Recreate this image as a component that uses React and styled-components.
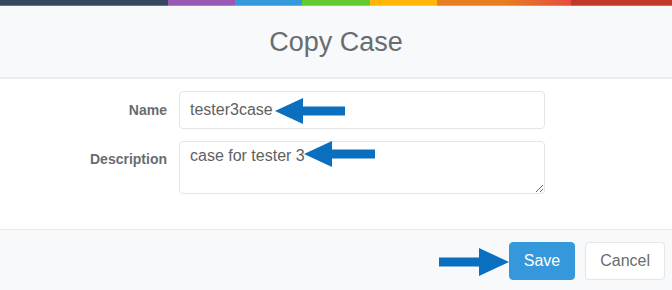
import React from 'react'
import styled, { createGlobalStyle } from 'styled-components'

const GlobalStyle = createGlobalStyle`
  html, body {
    margin: 0;
    padding: 0;
    background: #ffffff;
  }
  body {
    font-family: "Liberation Sans", Arial, sans-serif;
  }
`

const Arrow = ({ top, left, width, height, shaft, dir }) => {
  const head = Math.round(height * 1.07)
  const mid = height / 2
  const s1 = mid - shaft / 2
  const s2 = mid + shaft / 2
  const points =
    dir === 'right'
      ? `${width},${mid} ${width - head},0 ${width - head},${s1} 0,${s1} 0,${s2} ${width - head},${s2} ${width - head},${height}`
      : `0,${mid} ${head},0 ${head},${s1} ${width},${s1} ${width},${s2} ${head},${s2} ${head},${height}`
  return (
    <ArrowMark $top={top} $left={left} width={width} height={height} viewBox={`0 0 ${width} ${height}`}>
      <polygon points={points} fill="#0b6fc0" />
    </ArrowMark>
  )
}

const App = () => {
  return (
    <>
      <GlobalStyle />
      <Modal>
        <ColorLine />
        <Header>
          <Title>Copy Case</Title>
        </Header>
        <Body>
          <Form>
            <Label>Name</Label>
            <Input defaultValue="tester3case" />
            <Label $top>Description</Label>
            <TextArea defaultValue="case for tester 3" />
          </Form>
        </Body>
        <Footer>
          <Button $primary>Save</Button>
          <Button>Cancel</Button>
        </Footer>

        <Arrow top={98} left={275} width={70} height={26} shaft={9} />
        <Arrow top={141} left={304} width={71} height={26} shaft={9} />
        <Arrow top={248} left={439} width={70} height={28} shaft={9} dir="right" />
      </Modal>
    </>
  )
}

export default App

const Modal = styled.div`
  position: relative;
  width: 672px;
  height: 290px;
  overflow: hidden;
  background: #ffffff;
  color: #6a6c6f;
`

const ColorLine = styled.div`
  height: 5px;
  border-bottom: 1px solid rgba(255, 255, 255, 0.25);
  background-image: linear-gradient(
    to right,
    #34495e, #34495e 25%,
    #9b59b6 25%, #9b59b6 35%,
    #3498db 35%, #3498db 45%,
    #62cb31 45%, #62cb31 55%,
    #ffb606 55%, #ffb606 65%,
    #e67e22 65%, #e67e22 75%,
    #e74c3c 85%, #e74c3c 85%,
    #c0392b 85%, #c0392b 100%
  );
`

const Header = styled.div`
  height: 71px;
  background: #f7f9fa;
  border-bottom: 2px solid #ebeced;
  display: flex;
  align-items: center;
  justify-content: center;
`

const Title = styled.h4`
  margin: 0;
  font-size: 27px;
  font-weight: normal;
  color: #6a6c6f;
  padding-top: 2px;
`

const Body = styled.div`
  height: 138px;
  padding-top: 12px;
  border-bottom: 1px solid #e9eaeb;
`

const Form = styled.div`
  display: grid;
  grid-template-columns: 167px 366px;
  column-gap: 12px;
  row-gap: 12px;
`

const Label = styled.label`
  text-align: right;
  font-size: 14px;
  font-weight: bold;
  color: #6a6c6f;
  align-self: ${(p) => (p.$top ? 'start' : 'center')};
  padding-top: ${(p) => (p.$top ? '10px' : '0')};
`

const Input = styled.input`
  box-sizing: border-box;
  height: 38px;
  width: 366px;
  padding: 0 10px;
  border: 1px solid #e4e5e7;
  border-radius: 4px;
  font-family: "Liberation Sans", Arial, sans-serif;
  font-size: 16px;
  color: #5f6163;
  background: #ffffff;
  outline: none;
`

const TextArea = styled.textarea`
  box-sizing: border-box;
  height: 53px;
  width: 366px;
  padding: 5px 10px;
  border: 1px solid #e4e5e7;
  border-radius: 4px;
  font-family: "Liberation Sans", Arial, sans-serif;
  font-size: 16px;
  color: #5f6163;
  background: #ffffff;
  resize: vertical;
  outline: none;
`

const Footer = styled.div`
  height: 60px;
  background: #f7f9fa;
  display: flex;
  justify-content: flex-end;
  align-items: flex-start;
  gap: 10px;
  padding: 12px 7px 0 0;
  box-sizing: border-box;
`

const Button = styled.button`
  height: 38px;
  padding: 0 14px;
  border-radius: 4px;
  font-family: "Liberation Sans", Arial, sans-serif;
  font-size: 16px;
  cursor: pointer;
  border: 1px solid ${(p) => (p.$primary ? '#3498db' : '#e4e5e7')};
  background: ${(p) => (p.$primary ? '#3498db' : '#ffffff')};
  color: ${(p) => (p.$primary ? '#ffffff' : '#6a6c6f')};
`

const ArrowMark = styled.svg`
  position: absolute;
  top: ${(p) => p.$top}px;
  left: ${(p) => p.$left}px;
`
